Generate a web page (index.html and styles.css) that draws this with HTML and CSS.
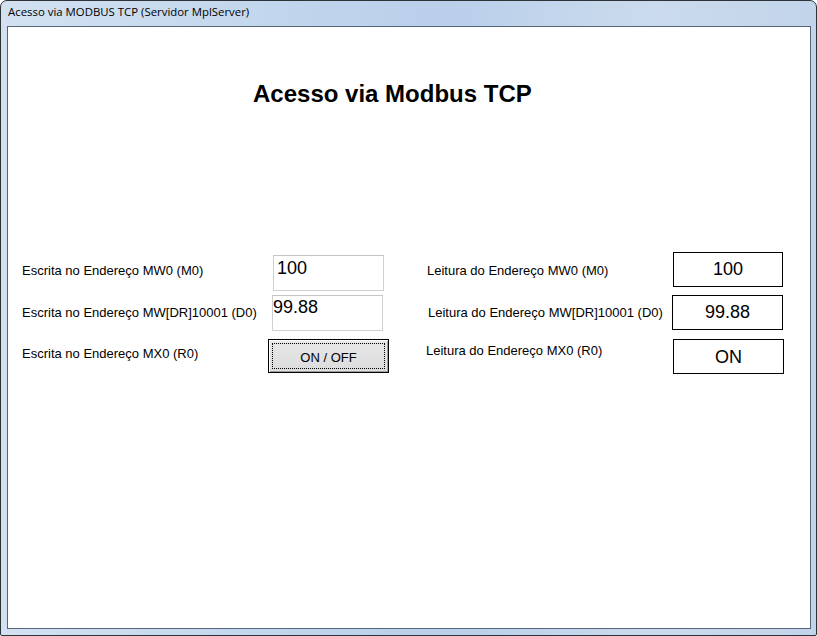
FILE: index.html
```html
<!DOCTYPE html>
<html lang="pt">
<head>
<meta charset="utf-8">
<title>Acesso via MODBUS TCP</title>
<link rel="stylesheet" href="styles.css">
</head>
<body>
<div class="window">
  <div class="titlebar">Acesso via MODBUS TCP (Servidor MplServer)</div>
  <div class="client">
    <h1 class="heading">Acesso via Modbus TCP</h1>
    <div class="form">
      <div class="label l1">Escrita no Endereço MW0 (M0)</div>
      <div class="input i1">100</div>
      <div class="label r1">Leitura do Endereço MW0 (M0)</div>
      <div class="box b1">100</div>

      <div class="label l2">Escrita no Endereço MW[DR]10001 (D0)</div>
      <div class="input i2">99.88</div>
      <div class="label r2">Leitura do Endereço MW[DR]10001 (D0)</div>
      <div class="box b2">99.88</div>

      <div class="label l3">Escrita no Endereço MX0 (R0)</div>
      <div class="button">ON / OFF</div>
      <div class="label r3">Leitura do Endereço MX0 (R0)</div>
      <div class="box b3">ON</div>
    </div>
  </div>
</div>
</body>
</html>
```

FILE: styles.css
```css
html, body {
  margin: 0;
  padding: 0;
  background: #ffffff;
}

.window {
  box-sizing: border-box;
  width: 817px;
  height: 636px;
  border: 1px solid #2e3338;
  border-radius: 7px 7px 2px 2px;
  background: linear-gradient(to right, #d3e1f1 0%, #c3d7ed 30%, #b9cfea 55%, #cbdbed 80%, #c2d4ea 100%);
  padding: 0 5px 6px 6px;
  display: flex;
  flex-direction: column;
}

.titlebar {
  height: 25px;
  box-sizing: border-box;
  padding: 2px 0 0 1px;
  font-family: "Open Sans", "Noto Sans", sans-serif;
  font-size: 11.4px;
  line-height: 18px;
  color: #000;
  white-space: nowrap;
}

.client {
  width: 802px;
  height: 601px;
  border: 1px solid #55667a;
  background: #ffffff;
  font-family: "Liberation Sans", Arial, sans-serif;
  color: #000;
}

.heading {
  margin: 53px 0 0 245px;
  font-size: 24px;
  line-height: 28px;
  font-weight: bold;
}

.form {
  margin-top: 143px;
  padding-left: 14px;
  display: grid;
  grid-template-columns: 250px 154px 246px 120px;
  grid-template-rows: 44px 44px 44px;
  align-items: start;
}

.label {
  font-size: 13px;
  line-height: 15px;
  white-space: nowrap;
}

.l1 { margin-top: 12px; }
.l2 { margin-top: 10px; }
.l3 { margin-top: 7px; }
.r1 { margin: 12px 0 0 1px; }
.r2 { margin: 10px 0 0 2px; }
.r3 { margin: 4px 0 0 0; }

.input {
  box-sizing: border-box;
  width: 111px;
  height: 36px;
  border: 1px solid #d0d0d0;
  border-top-color: #c4c4c4;
  font-size: 18px;
  line-height: 20px;
}

.i1 { margin: 4px 0 0 1px; padding: 2px 0 0 3px; }
.i2 { margin: 0; padding: 1px 0 0 0; }

.button {
  box-sizing: border-box;
  width: 121px;
  height: 34px;
  margin-left: -4px;
  border: 1px solid #000;
  background: linear-gradient(#e8e8e8, #dcdcdc);
  box-shadow: inset 1px 1px 0 #ffffff, inset -1px -1px 0 #a0a0a0;
  outline: 1px dotted #000;
  outline-offset: -5px;
  font-size: 13px;
  display: flex;
  align-items: center;
  justify-content: center;
  padding-top: 2px;
}

.box {
  box-sizing: border-box;
  width: 111px;
  height: 35px;
  border: 1px solid #000;
  font-size: 18px;
  display: flex;
  align-items: center;
  justify-content: center;
}

.b1 { margin: 1px 0 0 1px; width: 110px; }
.b2 { margin: 0; }
.b3 { margin: 0 0 0 1px; padding-top: 2px; }
```
